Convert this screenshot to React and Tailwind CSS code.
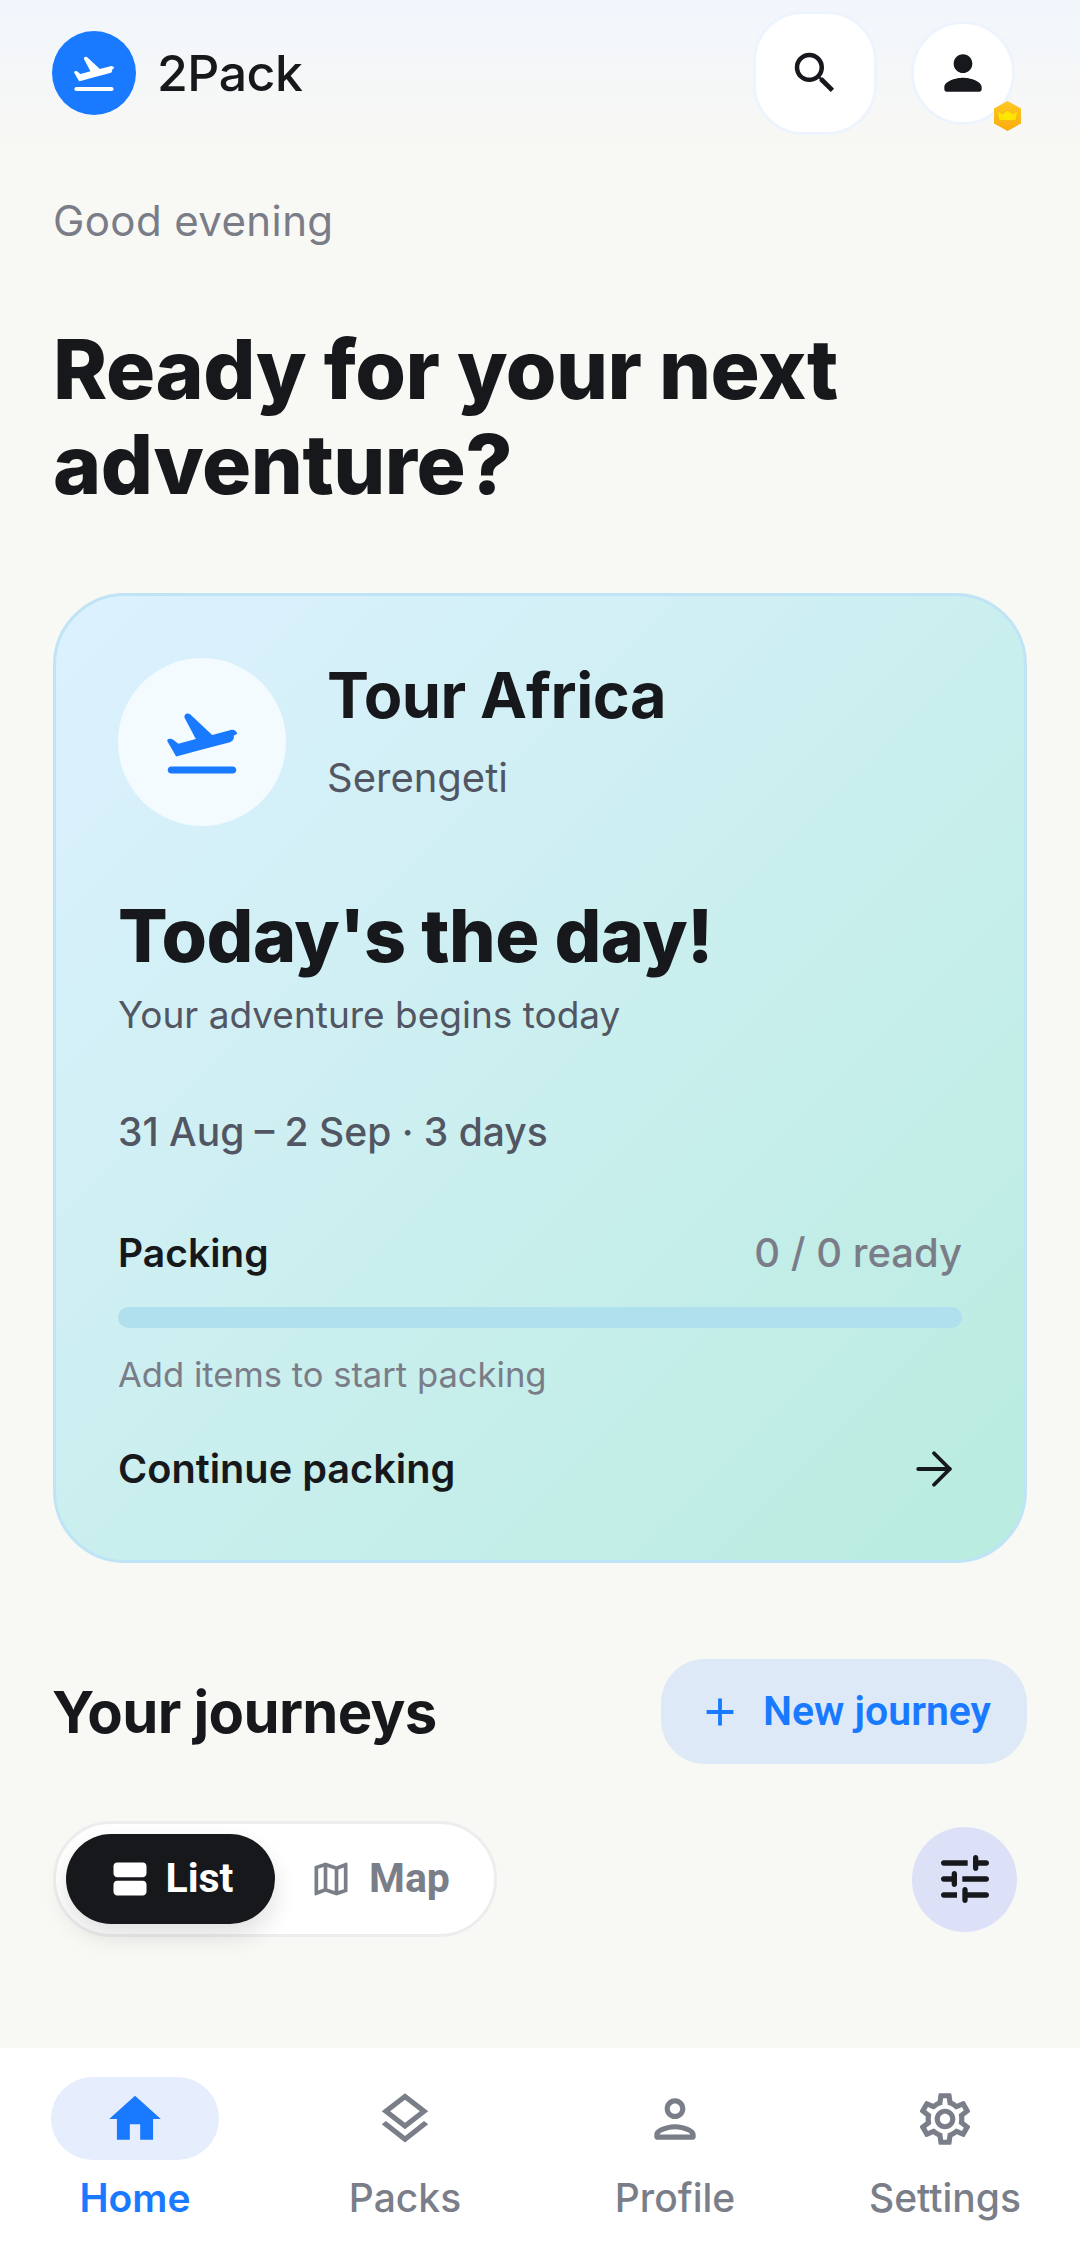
import { ArrowRight } from 'lucide-react';
import { MdAdd, MdHome, MdOutlineLayers, MdOutlineMap, MdOutlineSettings, MdSearch, MdViewAgenda } from 'react-icons/md';

function Plane({ className }) {
  return (
    <svg viewBox="0 0 24 24" className={className} fill="currentColor">
      <path d="M3.2 19h17.6c.55 0 1 .45 1 1s-.45 1-1 1H3.2c-.55 0-1-.45-1-1s.45-1 1-1zm18.87-9.36c-.21-.8-1.04-1.28-1.84-1.06L14.92 10 8.6 4.1c-.25-.23-.6-.32-.93-.23-.6.16-.88.84-.57 1.37l3.13 5.93-4.97 1.33-1.6-1.25c-.25-.2-.57-.26-.87-.18l-.35.1c-.3.08-.45.42-.3.7l1.7 2.95.77 1.33 1.6-.43 5.31-1.42 4.35-1.16 4.13-1.08c.81-.23 1.28-1.05 1.07-1.85z" />
    </svg>
  );
}

function PersonFilled({ className }) {
  return (
    <svg viewBox="0 0 24 24" className={className} fill="currentColor">
      <path d="M12 12c2.21 0 4-1.79 4-4s-1.79-4-4-4-4 1.79-4 4 1.79 4 4 4zm0 2c-2.67 0-8 1.34-8 4v1c0 .55.45 1 1 1h14c.55 0 1-.45 1-1v-1c0-2.66-5.33-4-8-4z" />
    </svg>
  );
}

function PersonOutline({ className }) {
  return (
    <svg viewBox="0 0 24 24" className={className} fill="currentColor">
      <path d="M12 6c1.1 0 2 .9 2 2s-.9 2-2 2-2-.9-2-2 .9-2 2-2m0 10c2.7 0 5.8 1.29 6 2H6c.23-.72 3.31-2 6-2m0-12C9.79 4 8 5.79 8 8s1.79 4 4 4 4-1.79 4-4-1.79-4-4-4zm0 10c-2.67 0-8 1.34-8 4v1c0 .55.45 1 1 1h14c.55 0 1-.45 1-1v-1c0-2.66-5.33-4-8-4z" />
    </svg>
  );
}

function Tune({ className }) {
  return (
    <svg viewBox="0 0 24 24" className={className} fill="currentColor">
      <path d="M3 18c0 .55.45 1 1 1h5v-2H4c-.55 0-1 .45-1 1zM3 6c0 .55.45 1 1 1h9V5H4c-.55 0-1 .45-1 1zm10 14v-1h7c.55 0 1-.45 1-1s-.45-1-1-1h-7v-1c0-.55-.45-1-1-1s-1 .45-1 1v4c0 .55.45 1 1 1s1-.45 1-1zM7 10v1H4c-.55 0-1 .45-1 1s.45 1 1 1h3v1c0 .55.45 1 1 1s1-.45 1-1v-4c0-.55-.45-1-1-1s-1 .45-1 1zm14 2c0-.55-.45-1-1-1h-9v2h9c.55 0 1-.45 1-1zm-5-3c.55 0 1-.45 1-1V7h3c.55 0 1-.45 1-1s-.45-1-1-1h-3V4c0-.55-.45-1-1-1s-1 .45-1 1v4c0 .55.45 1 1 1z" />
    </svg>
  );
}

function NavItem({ icon: Icon, label, active }) {
  return (
    <div className="flex flex-col items-center">
      <div className={`w-[168px] h-[83px] rounded-[42px] flex items-center justify-center ${active ? 'bg-[#e6edfd] text-[#1a7aff]' : 'text-[#7a7e89]'}`}>
        <Icon className="w-[62px] h-[62px]" />
      </div>
      <span className={`mt-[14px] text-[39px] leading-[48px] ${active ? 'text-[#1a7aff] font-semibold' : 'text-[#7a7e89] font-medium'}`}>{label}</span>
    </div>
  );
}

export default function App() {
  return (
    <div className="w-[1080px] h-[2257px] flex flex-col overflow-hidden bg-[#f8f8f4] text-[#16181c] font-['Inter',sans-serif]">
      <main className="flex-1 bg-gradient-to-b from-[#f2f6fc] to-[#f8f8f4] to-[150px]">
        {/* Header */}
        <header className="h-[146px] pl-[52px] pr-[65px] flex items-center">
          <div className="w-[84px] h-[84px] rounded-full bg-[#1a7aff] flex items-center justify-center text-white">
            <Plane className="w-[48px] h-[48px]" />
          </div>
          <span className="ml-[21px] text-[50px] font-medium tracking-[-0.5px]">2Pack</span>
          <button className="ml-auto w-[124px] h-[124px] rounded-[50px] bg-white border-[3px] border-[#eef4fd] flex items-center justify-center">
            <MdSearch className="w-[54px] h-[54px]" />
          </button>
          <div className="relative ml-[34px] w-[104px] h-[104px] rounded-full bg-white border-[3px] border-[#eef4fd] flex items-center justify-center">
            <PersonFilled className="w-[56px] h-[56px]" />
            <svg viewBox="0 0 27 30" className="absolute w-[27px] h-[30px] right-[-9px] bottom-[-9px]">
              <defs>
                <linearGradient id="badge" x1="0" y1="0" x2="0" y2="1">
                  <stop offset="0" stopColor="#ffc824" />
                  <stop offset="1" stopColor="#f8ac0c" />
                </linearGradient>
              </defs>
              <path d="M13.5 0 27 7.5v15L13.5 30 0 22.5v-15z" fill="url(#badge)" />
              <path d="M4 11l4.5 2.5L13.5 9.5l5 4L23 11l-1.5 8h-16z" fill="#ffe600" />
            </svg>
          </div>
        </header>

        <div className="px-[53px]">
          {/* Greeting */}
          <p className="mt-[47px] text-[42px] leading-[56px] tracking-[0.4px] text-[#7a7d88]">Good evening</p>
          <h1 className="mt-[73px] text-[82px] leading-[95px] font-extrabold tracking-[-0.5px]">Ready for your next<br />adventure?</h1>

          {/* Trip card */}
          <section className="mt-[81px] h-[970px] rounded-[72px] border-[3px] border-[#bfe4f5] bg-gradient-to-br from-[#dcf1ff] to-[#b9ecdf] px-[62px] pt-[59px]">
            <div className="flex">
              <div className="w-[168px] h-[168px] mt-[3px] rounded-full bg-[#f3fbfe] flex items-center justify-center text-[#1a7aff]">
                <Plane className="w-[84px] h-[84px]" />
              </div>
              <div className="ml-[41px]">
                <h2 className="text-[63px] leading-[80px] font-bold tracking-[-0.5px]">Tour Africa</h2>
                <p className="mt-[18px] text-[40px] leading-[50px] text-[#525662]">Serengeti</p>
              </div>
            </div>
            <h3 className="mt-[65px] text-[73.5px] leading-[90px] font-extrabold tracking-[-0.5px]">Today's the day!</h3>
            <p className="mt-[11px] text-[37px] leading-[46px] text-[#525662]">Your adventure begins today</p>
            <p className="mt-[69px] text-[39px] leading-[50px] font-medium text-[#525662]">31 Aug – 2 Sep · 3 days</p>
            <div className="mt-[71px] flex justify-between items-center leading-[50px]">
              <span className="text-[39px] font-semibold">Packing</span>
              <span className="text-[40px] text-[#7a7d88] font-medium">0 / 0 ready</span>
            </div>
            <div className="mt-[29px] h-[21px] rounded-full bg-[#b0e0ee]" />
            <p className="mt-[24px] text-[34.6px] leading-[44px] text-[#7a7d88]">Add items to start packing</p>
            <div className="mt-[48px] flex justify-between items-center h-[50px]">
              <span className="text-[39.7px] leading-[50px] font-semibold">Continue packing</span>
              <ArrowRight size={54} strokeWidth={1.7} className="mr-[1px]" />
            </div>
          </section>

          {/* Journeys */}
          <div className="mt-[96px] flex items-center justify-between">
            <h2 className="text-[58px] leading-[80px] font-bold tracking-[-0.7px] ml-[-1px]">Your journeys</h2>
            <button className="h-[105px] w-[366px] rounded-[44px] bg-[#dde9f7] text-[#1a7aff] flex items-center justify-center gap-[20px] font-['Roboto',sans-serif] text-[41px] font-semibold">
              <MdAdd className="w-[46px] h-[46px]" />
              New journey
            </button>
          </div>
          <div className="mt-[57px] flex items-center justify-between">
            <div className="w-[444px] h-[116px] rounded-full bg-white border-[3px] border-[#eceded] flex items-center pl-[10px] font-['Roboto',sans-serif] text-[41px] font-bold">
              <div className="w-[209px] h-[90px] rounded-full bg-[#16181c] text-white flex items-center justify-center gap-[14px] shadow-[0_12px_24px_rgba(0,0,0,0.12)]">
                <MdViewAgenda className="w-[44px] h-[44px]" />
                List
              </div>
              <div className="ml-[34px] flex items-center gap-[16px] text-[#7a7e89]">
                <MdOutlineMap className="w-[44px] h-[44px]" />
                Map
              </div>
            </div>
            <div className="w-[105px] h-[105px] mr-[10px] rounded-full bg-[#dde1f8] flex items-center justify-center">
              <Tune className="w-[64px] h-[64px]" />
            </div>
          </div>
        </div>
      </main>

      {/* Bottom nav */}
      <nav className="h-[209px] bg-white grid grid-cols-4 pt-[29px]">
        <NavItem icon={MdHome} label="Home" active />
        <NavItem icon={MdOutlineLayers} label="Packs" />
        <NavItem icon={PersonOutline} label="Profile" />
        <NavItem icon={MdOutlineSettings} label="Settings" />
      </nav>
    </div>
  );
}
